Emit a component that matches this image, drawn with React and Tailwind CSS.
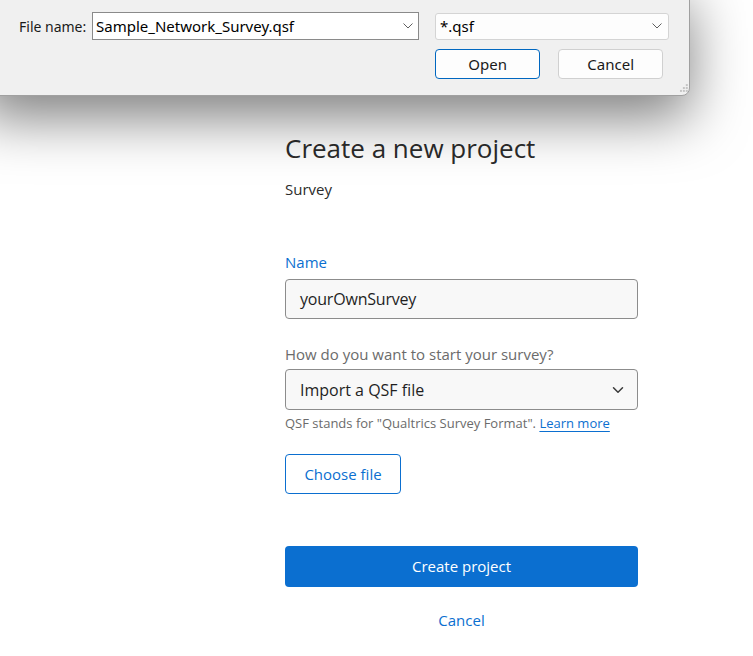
import { ChevronDown } from 'lucide-react';

function Chevron({ className }) {
  return (
    <svg width="10" height="6" viewBox="0 0 10 6" className={className}>
      <path d="M0.5 0.5 L5 5 L9.5 0.5" fill="none" stroke="#5f5f5f" strokeWidth="1" />
    </svg>
  );
}

function FileDialog() {
  return (
    <div
      className="absolute left-[-20px] top-[-20px] h-[116px] w-[710px] rounded-br-lg border border-[#a0a0a0] bg-[#f0f0f0] shadow-[0_22px_55px_rgba(0,0,0,0.5)]"
      style={{ fontFamily: '"Noto Sans", "Open Sans", sans-serif' }}
    >
      <div className="ml-[20px] mt-[31px] flex items-center text-[14px] text-[#1a1a1a]">
        <span className="ml-[18px] w-[73px]">File name:</span>
        <div className="flex h-[28px] w-[327px] items-center justify-between border border-[#8a8a8a] bg-white pl-[3px] pr-[5px]">
          <span className="text-[15px] text-black">Sample_Network_Survey.qsf</span>
          <Chevron />
        </div>
        <div className="ml-[16px] flex h-[27px] w-[234px] items-center justify-between rounded-[3px] border border-[#d4d4d4] bg-[#fdfdfd] pl-[4px] pr-[6px]">
          <span className="text-[15px] text-black">*.qsf</span>
          <Chevron />
        </div>
      </div>
      <div className="ml-[454px] mt-[9px] flex gap-[18px] text-[15px] text-[#1a1a1a]">
        <button className="flex h-[30px] w-[108px] items-center justify-center rounded-[4px] border border-[#0067c0] bg-[#fdfdfd]">
          Open
        </button>
        <button className="flex h-[30px] w-[108px] items-center justify-center rounded-[4px] border border-[#d0d0d0] bg-[#fdfdfd]">
          Cancel
        </button>
        <svg width="10" height="10" viewBox="0 0 10 10" className="mt-[34px] ml-[-2px]">
          <g fill="#c4c4c4">
            <rect x="7" y="1" width="2" height="2" />
            <rect x="4" y="4" width="2" height="2" />
            <rect x="7" y="4" width="2" height="2" />
            <rect x="1" y="7" width="2" height="2" />
            <rect x="4" y="7" width="2" height="2" />
            <rect x="7" y="7" width="2" height="2" />
          </g>
        </svg>
      </div>
    </div>
  );
}

export default function App() {
  return (
    <div
      className="relative h-[656px] w-[753px] overflow-hidden bg-white"
      style={{ fontFamily: '"Open Sans", "Noto Sans", sans-serif' }}
    >
      <div className="ml-[285px] flex w-[353px] flex-col pt-[130px]">
        <h1 className="text-[26px] leading-[36px] text-[#2b2b2b]">Create a new project</h1>
        <p className="mt-[13px] text-[15px] leading-[20px] text-[#2b2b2b]">Survey</p>

        <label className="mt-[53px] text-[15px] leading-[20px] text-[#0b6fd0]">Name</label>
        <div className="mt-[7px] flex h-[40px] items-center rounded-[4px] border border-[#8c8c8c] bg-[#f8f8f8] px-[14px] text-[16px] tracking-[-0.2px] text-[#1f1f1f]">
          yourOwnSurvey
        </div>

        <label className="mt-[25px] text-[15px] leading-[20px] text-[#6b6b6b]">
          How do you want to start your survey?
        </label>
        <div className="mt-[5px] flex h-[41px] items-center justify-between rounded-[4px] border border-[#8c8c8c] bg-[#f8f8f8] pl-[14px] pr-[10px] text-[16px] text-[#1f1f1f]">
          <span>Import a QSF file</span>
          <ChevronDown size={18} strokeWidth={2} className="text-[#3a3a3a]" />
        </div>
        <p className="mt-[4px] text-[13px] leading-[18px] text-[#6b6b6b]">
          QSF stands for "Qualtrics Survey Format".{' '}
          <a className="text-[#0b6fd0] underline underline-offset-[3px]">Learn more</a>
        </p>

        <div className="mt-[22px]">
          <button className="h-[40px] w-[116px] rounded-[4px] border border-[#0b6fd0] bg-white text-[15px] text-[#0b6fd0]">
            Choose file
          </button>
        </div>

        <button className="mt-[52px] h-[41px] w-full rounded-[4px] bg-[#0b6fd0] text-[15px] text-white">
          Create project
        </button>
        <button className="mt-[23px] self-center text-[15px] leading-[20px] text-[#0b6fd0]">Cancel</button>
      </div>
      <FileDialog />
    </div>
  );
}
